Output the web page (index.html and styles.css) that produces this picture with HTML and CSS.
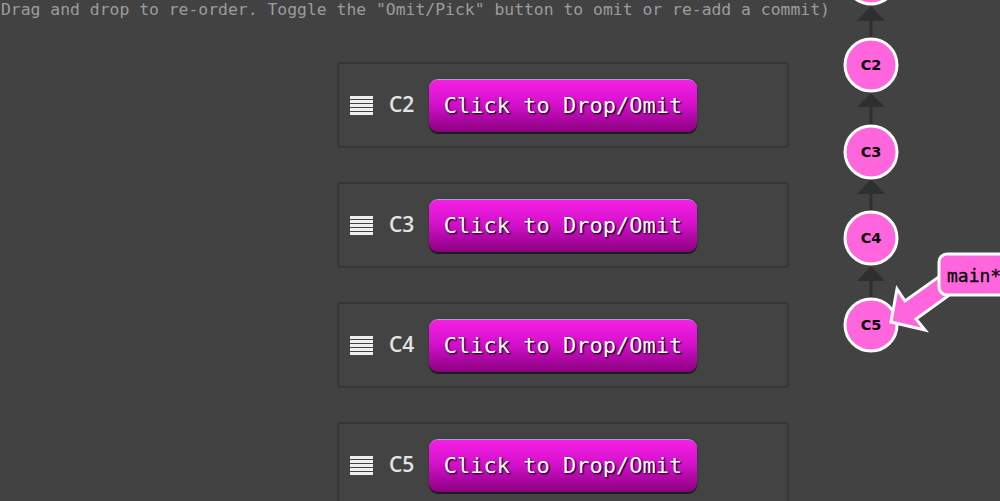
FILE: index.html
```html
<!DOCTYPE html>
<html>
<head>
<meta charset="utf-8">
<link rel="stylesheet" href="styles.css">
</head>
<body>
<p class="hint">Drag and drop to re-order. Toggle the "Omit/Pick" button to omit or re-add a commit)</p>
<div class="list">
  <div class="card"><span class="grip"><i></i><i></i><i></i><i></i><i></i></span><span class="name">C2</span><button class="btn">Click to Drop/Omit</button></div>
  <div class="card"><span class="grip"><i></i><i></i><i></i><i></i><i></i></span><span class="name">C3</span><button class="btn">Click to Drop/Omit</button></div>
  <div class="card"><span class="grip"><i></i><i></i><i></i><i></i><i></i></span><span class="name">C4</span><button class="btn">Click to Drop/Omit</button></div>
  <div class="card"><span class="grip"><i></i><i></i><i></i><i></i><i></i></span><span class="name">C5</span><button class="btn">Click to Drop/Omit</button></div>
</div>
<svg class="graph" width="1000" height="501" viewBox="0 0 1000 501">
  <g class="edges">
    <line x1="871" y1="20" x2="871" y2="38"/>
    <polygon points="871,6 857,21 885,21"/>
    <line x1="871" y1="106" x2="871" y2="125"/>
    <polygon points="871,93 857,107 885,107"/>
    <line x1="871" y1="193" x2="871" y2="212"/>
    <polygon points="871,179 857,194 885,194"/>
    <line x1="871" y1="280" x2="871" y2="299"/>
    <polygon points="871,266 857,281 885,281"/>
  </g>
  <g class="nodes">
    <circle cx="871" cy="-22" r="26"/>
    <circle cx="871" cy="65" r="26"/>
    <circle cx="871" cy="152" r="26"/>
    <circle cx="871" cy="238" r="26"/>
    <circle cx="871" cy="325" r="26"/>
  </g>
  <g class="labels">
    <text x="871" y="70">C2</text>
    <text x="871" y="157">C3</text>
    <text x="871" y="243">C4</text>
    <text x="871" y="330">C5</text>
  </g>
  <polygon class="arrow" points="891,322 897,289 905,301 940,276 948,296 916,319 925,330"/>
  <rect class="tag" x="939" y="254" width="80" height="41" rx="8"/>
  <text class="tagtext" x="947" y="282">main*</text>
</svg>
</body>
</html>
```
FILE: styles.css
```css
html, body {
  margin: 0;
  padding: 0;
  background: #424242;
  width: 1000px;
  height: 501px;
  overflow: hidden;
}
body {
  position: relative;
}
.hint {
  margin: 0;
  padding-left: 1px;
  font-family: "DejaVu Sans Mono", "Liberation Mono", monospace;
  font-size: 16.4px;
  line-height: 20px;
  color: #9c9c9c;
  white-space: nowrap;
}
.list {
  display: flex;
  flex-direction: column;
  gap: 36px;
  margin-left: 338px;
  margin-top: 43px;
}
.card {
  box-sizing: border-box;
  width: 450px;
  height: 84px;
  flex: none;
  border: 1px solid #343434;
  box-shadow: 0 0 2px rgba(0,0,0,0.25);
  background: #434343;
  display: flex;
  align-items: center;
  padding-left: 11px;
}
.grip {
  width: 23px;
  height: 19px;
  flex: none;
  display: flex;
  flex-direction: column;
  justify-content: space-between;
  margin-top: 1px;
}
.grip i {
  display: block;
  height: 3px;
  background: #eeeeee;
}
.name {
  margin-left: 16px;
  width: 40px;
  font-family: "Open Sans", "DejaVu Sans", sans-serif;
  font-weight: 600;
  font-size: 21px;
  color: #e4e4e4;
  line-height: 1;
  margin-top: -2px;
}
.btn {
  box-sizing: border-box;
  width: 268px;
  height: 53px;
  border: none;
  border-top: 1px solid #a99ad8;
  border-radius: 9px;
  background: linear-gradient(to bottom, #f51fe3 0%, #d611cd 45%, #8a0080 100%);
  box-shadow: 0 2px 0 #1d1d1d, 0 1px 2px rgba(0,0,0,0.5);
  color: #ffffff;
  font-family: "DejaVu Sans Mono", "Liberation Mono", monospace;
  font-size: 22px;
  text-shadow: 1px 1px 0 #3a003a, 1px 1px 2px #000;
  padding: 0 0 2px 0;
  margin-top: 1px;
}
.graph {
  position: absolute;
  left: 0;
  top: 0;
  pointer-events: none;
}
.edges line {
  stroke: #2f2f2f;
  stroke-width: 3;
}
.edges polygon {
  fill: #2f2f2f;
}
.nodes circle {
  fill: #ff66dd;
  stroke: #ffffff;
  stroke-width: 3;
}
.labels text {
  font-family: "DejaVu Sans", "Liberation Sans", sans-serif;
  font-weight: bold;
  font-size: 14.5px;
  text-anchor: middle;
  fill: #000;
}
.arrow {
  fill: #ff66dd;
  stroke: #ffffff;
  stroke-width: 3;
  stroke-linejoin: miter;
}
.tag {
  fill: #ff66dd;
  stroke: #ffffff;
  stroke-width: 3;
}
.tagtext {
  font-family: "DejaVu Sans Mono", "Liberation Mono", monospace;
  font-size: 18px;
  font-weight: 500;
  fill: #000;
  stroke: #000;
  stroke-width: 0.3;
}
```
